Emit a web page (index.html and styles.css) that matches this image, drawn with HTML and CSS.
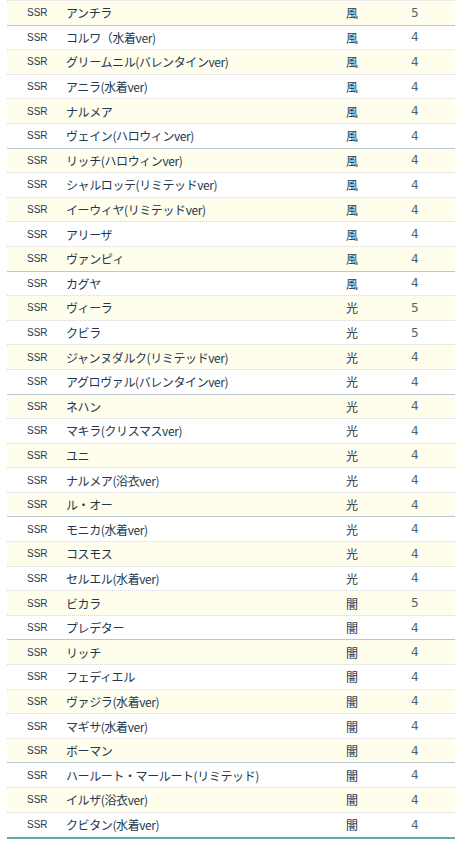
FILE: index.html
```html
<!DOCTYPE html>
<html lang="ja">
<head>
<meta charset="utf-8">
<link rel="stylesheet" href="styles.css">
</head>
<body>
<div class="list">
  <div class="row odd end"><span class="r">SSR</span><span class="n">アンチラ</span><span class="e">風</span><span class="v">5</span></div>
  <div class="row"><span class="r">SSR</span><span class="n">コルワ（水着ver)</span><span class="e">風</span><span class="v">4</span></div>
  <div class="row odd"><span class="r">SSR</span><span class="n">グリームニル(バレンタインver)</span><span class="e">風</span><span class="v">4</span></div>
  <div class="row"><span class="r">SSR</span><span class="n">アニラ(水着ver)</span><span class="e">風</span><span class="v">4</span></div>
  <div class="row odd"><span class="r">SSR</span><span class="n">ナルメア</span><span class="e">風</span><span class="v">4</span></div>
  <div class="row end"><span class="r">SSR</span><span class="n">ヴェイン(ハロウィンver)</span><span class="e">風</span><span class="v">4</span></div>
  <div class="row odd"><span class="r">SSR</span><span class="n">リッチ(ハロウィンver)</span><span class="e">風</span><span class="v">4</span></div>
  <div class="row"><span class="r">SSR</span><span class="n">シャルロッテ(リミテッドver)</span><span class="e">風</span><span class="v">4</span></div>
  <div class="row odd"><span class="r">SSR</span><span class="n">イーウィヤ(リミテッドver)</span><span class="e">風</span><span class="v">4</span></div>
  <div class="row"><span class="r">SSR</span><span class="n">アリーザ</span><span class="e">風</span><span class="v">4</span></div>
  <div class="row odd end"><span class="r">SSR</span><span class="n">ヴァンピィ</span><span class="e">風</span><span class="v">4</span></div>
  <div class="row"><span class="r">SSR</span><span class="n">カグヤ</span><span class="e">風</span><span class="v">4</span></div>
  <div class="row odd"><span class="r">SSR</span><span class="n">ヴィーラ</span><span class="e">光</span><span class="v">5</span></div>
  <div class="row"><span class="r">SSR</span><span class="n">クビラ</span><span class="e">光</span><span class="v">5</span></div>
  <div class="row odd"><span class="r">SSR</span><span class="n">ジャンヌダルク(リミテッドver)</span><span class="e">光</span><span class="v">4</span></div>
  <div class="row end"><span class="r">SSR</span><span class="n">アグロヴァル(バレンタインver)</span><span class="e">光</span><span class="v">4</span></div>
  <div class="row odd"><span class="r">SSR</span><span class="n">ネハン</span><span class="e">光</span><span class="v">4</span></div>
  <div class="row"><span class="r">SSR</span><span class="n">マキラ(クリスマスver)</span><span class="e">光</span><span class="v">4</span></div>
  <div class="row odd"><span class="r">SSR</span><span class="n">ユニ</span><span class="e">光</span><span class="v">4</span></div>
  <div class="row"><span class="r">SSR</span><span class="n">ナルメア(浴衣ver)</span><span class="e">光</span><span class="v">4</span></div>
  <div class="row odd end"><span class="r">SSR</span><span class="n">ル・オー</span><span class="e">光</span><span class="v">4</span></div>
  <div class="row"><span class="r">SSR</span><span class="n">モニカ(水着ver)</span><span class="e">光</span><span class="v">4</span></div>
  <div class="row odd"><span class="r">SSR</span><span class="n">コスモス</span><span class="e">光</span><span class="v">4</span></div>
  <div class="row"><span class="r">SSR</span><span class="n">セルエル(水着ver)</span><span class="e">光</span><span class="v">4</span></div>
  <div class="row odd"><span class="r">SSR</span><span class="n">ビカラ</span><span class="e">闇</span><span class="v">5</span></div>
  <div class="row end"><span class="r">SSR</span><span class="n">プレデター</span><span class="e">闇</span><span class="v">4</span></div>
  <div class="row odd"><span class="r">SSR</span><span class="n">リッチ</span><span class="e">闇</span><span class="v">4</span></div>
  <div class="row"><span class="r">SSR</span><span class="n">フェディエル</span><span class="e">闇</span><span class="v">4</span></div>
  <div class="row odd"><span class="r">SSR</span><span class="n">ヴァジラ(水着ver)</span><span class="e">闇</span><span class="v">4</span></div>
  <div class="row"><span class="r">SSR</span><span class="n">マギサ(水着ver)</span><span class="e">闇</span><span class="v">4</span></div>
  <div class="row odd end"><span class="r">SSR</span><span class="n">ボーマン</span><span class="e">闇</span><span class="v">4</span></div>
  <div class="row"><span class="r">SSR</span><span class="n">ハールート・マールート(リミテッド)</span><span class="e">闇</span><span class="v">4</span></div>
  <div class="row odd"><span class="r">SSR</span><span class="n">イルザ(浴衣ver)</span><span class="e">闇</span><span class="v">4</span></div>
  <div class="row last"><span class="r">SSR</span><span class="n">クビタン(水着ver)</span><span class="e">闇</span><span class="v">4</span></div>
</div>
</body>
</html>
```
FILE: styles.css
```css
html, body {
  margin: 0;
  padding: 0;
  background: #ffffff;
}
body {
  font-family: "Noto Sans CJK JP", "Liberation Sans", sans-serif;
  color: #1e3850;
}
.list {
  margin: 0 6px 0 7px;
  border-top: 1px dotted #d8d8d8;
  border-bottom: 2px solid #5fa9a9;
}
.row {
  box-sizing: border-box;
  height: 24.6px;
  display: grid;
  grid-template-columns: 59px 280px 65px 1fr;
  align-items: center;
  border-bottom: 1px dotted #d6d6d6;
  background: #ffffff;
}
.row.odd {
  background: #fffdec;
}
.row.end {
  border-bottom: 1px solid #b7c8d2;
}
.row.last {
  border-bottom: none;
}
.r {
  padding-left: 20px;
  font-family: "Liberation Sans", sans-serif;
  font-size: 10px;
  color: #243a52;
}
.n {
  font-size: 12px;
  letter-spacing: -0.4px;
  white-space: nowrap;
}
.e {
  font-size: 12px;
  color: #1e3850;
}
.v {
  font-family: "DejaVu Sans", "Liberation Sans", sans-serif;
  font-size: 12px;
  color: #4a6276;
}
```
